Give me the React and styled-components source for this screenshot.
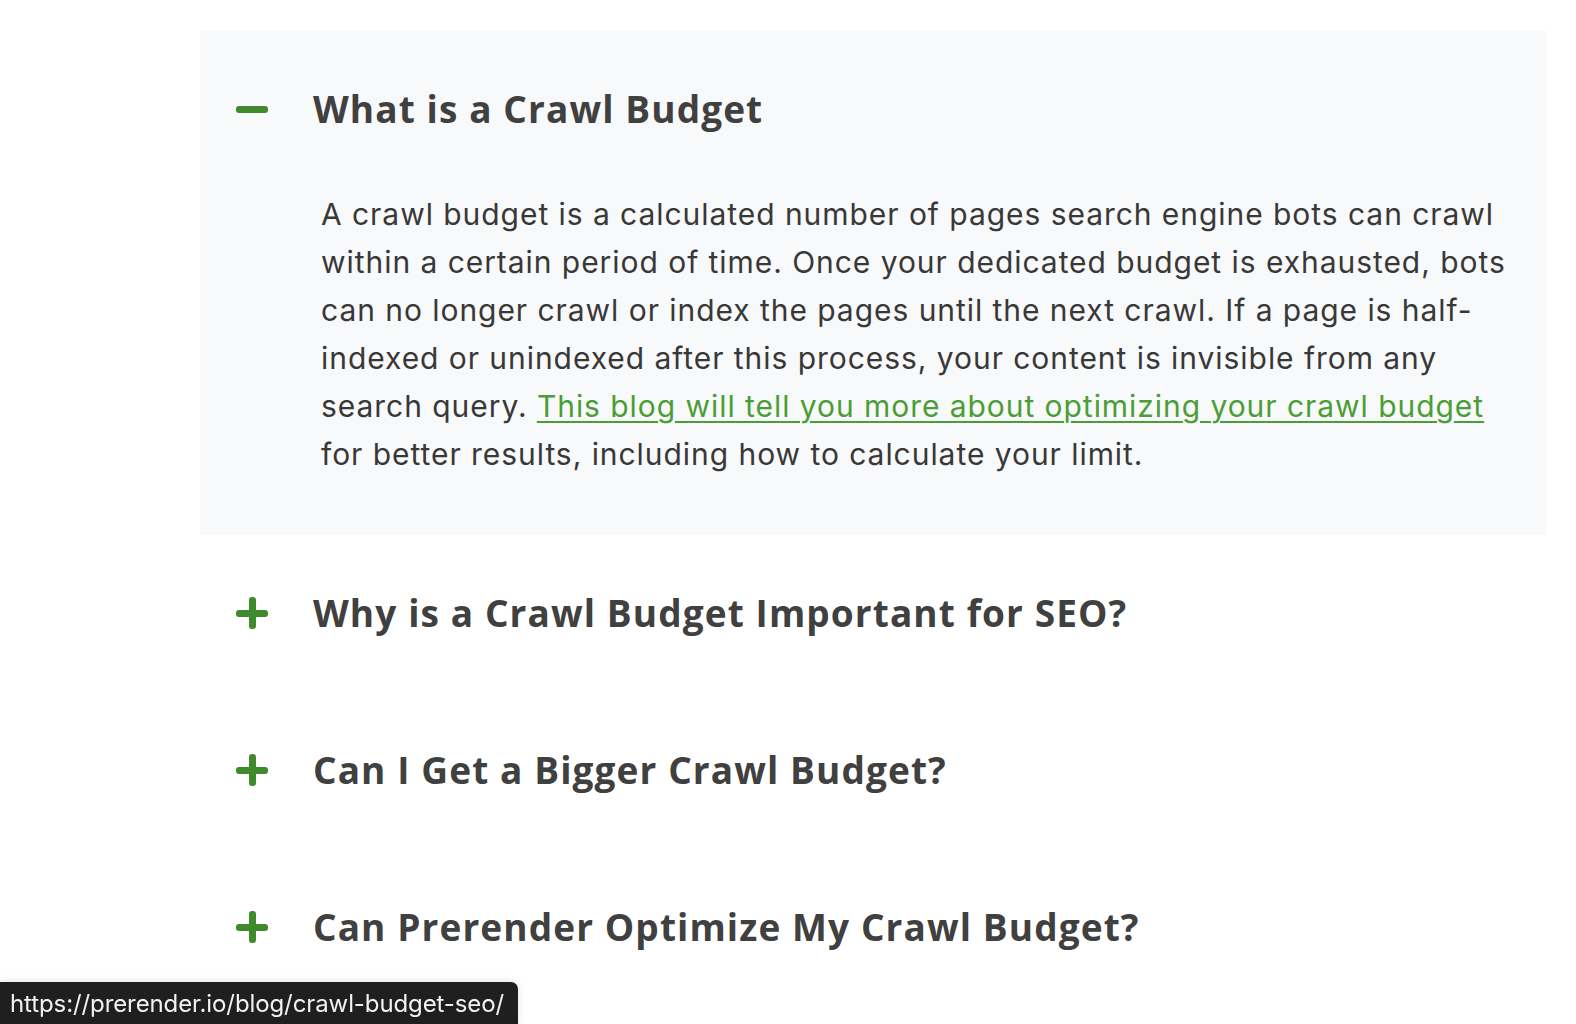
import React, { useState } from "react";
import styled, { createGlobalStyle } from "styled-components";

const Global = createGlobalStyle`
  html, body { margin: 0; padding: 0; background: #ffffff; }
  body { font-family: Inter, "Liberation Sans", sans-serif; }
`;

const Page = styled.div`
  padding: 31px 30px 0 200px;
  width: 1346px;
`;

const Item = styled.section`
  background: ${(p) => (p.$open ? "#f8f9fa" : "transparent")};
  padding: 55px 36px 56px 36px;
`;

const Header = styled.button`
  display: flex;
  align-items: center;
  gap: 45px;
  border: 0;
  background: none;
  padding: 0;
  margin: 0;
  cursor: pointer;
  text-align: left;
`;

const IconBox = styled.span`
  position: relative;
  width: 32px;
  height: 32px;
  flex: 0 0 32px;
`;

const Bar = styled.span`
  position: absolute;
  background: #3f8a2c;
  border-radius: 3px;
  ${(p) =>
    p.$vertical
      ? "left: 12.5px; top: 0; width: 7px; height: 32px;"
      : "left: 0; top: 12.5px; width: 32px; height: 7px;"}
`;

const Title = styled.h3`
  margin: 0;
  font-family: "Open Sans", "Noto Sans", sans-serif;
  font-weight: 700;
  font-size: 37px;
  line-height: 46px;
  color: #404040;
  letter-spacing: 1.1px;
`;

const Body = styled.p`
  margin: 58px 0 1px 85px;
  width: 1195px;
  font-family: Inter, sans-serif;
  font-size: 30px;
  letter-spacing: 0.95px;
  line-height: 48px;
  color: #383838;
`;

const Link = styled.a`
  color: #4a9e35;
  text-decoration: underline;
  text-decoration-thickness: 2px;
  text-underline-offset: 4px;
`;

const StatusBubble = styled.div`
  position: fixed;
  left: 0;
  bottom: 0;
  height: 42px;
  width: 518px;
  box-sizing: border-box;
  background: #1f1f1f;
  border-top-right-radius: 7px;
  color: #f2f2f2;
  font-family: Inter, "Liberation Sans", sans-serif;
  font-size: 24px;
  letter-spacing: -0.1px;
  line-height: 43px;
  padding-left: 10px;
  white-space: nowrap;
  box-shadow: 0 0 8px rgba(0, 0, 0, 0.12);
`;

const items = [
  { q: "What is a Crawl Budget" },
  { q: "Why is a Crawl Budget Important for SEO?" },
  { q: "Can I Get a Bigger Crawl Budget?" },
  { q: "Can Prerender Optimize My Crawl Budget?" },
];

function Icon({ open }) {
  return (
    <IconBox>
      <Bar />
      {!open && <Bar $vertical />}
    </IconBox>
  );
}

export default function App() {
  const [open, setOpen] = useState(0);
  return (
    <>
      <Global />
      <Page>
        {items.map((it, i) => (
          <Item key={i} $open={open === i}>
            <Header onClick={() => setOpen(open === i ? -1 : i)}>
              <Icon open={open === i} />
              <Title>{it.q}</Title>
            </Header>
            {open === i && i === 0 && (
              <Body>
                A crawl budget is a calculated number of pages search engine bots can crawl
                within a certain period of time. Once your dedicated budget is exhausted, bots
                can no longer crawl or index the pages until the next crawl. If a page is
                half-indexed or unindexed after this process, your content is invisible from any
                search query.{" "}
                <Link href="#">This blog will tell you more about optimizing your crawl budget</Link>{" "}
                for better results, including how to calculate your limit.
              </Body>
            )}
          </Item>
        ))}
      </Page>
      <StatusBubble>https://prerender.io/blog/crawl-budget-seo/</StatusBubble>
    </>
  );
}
